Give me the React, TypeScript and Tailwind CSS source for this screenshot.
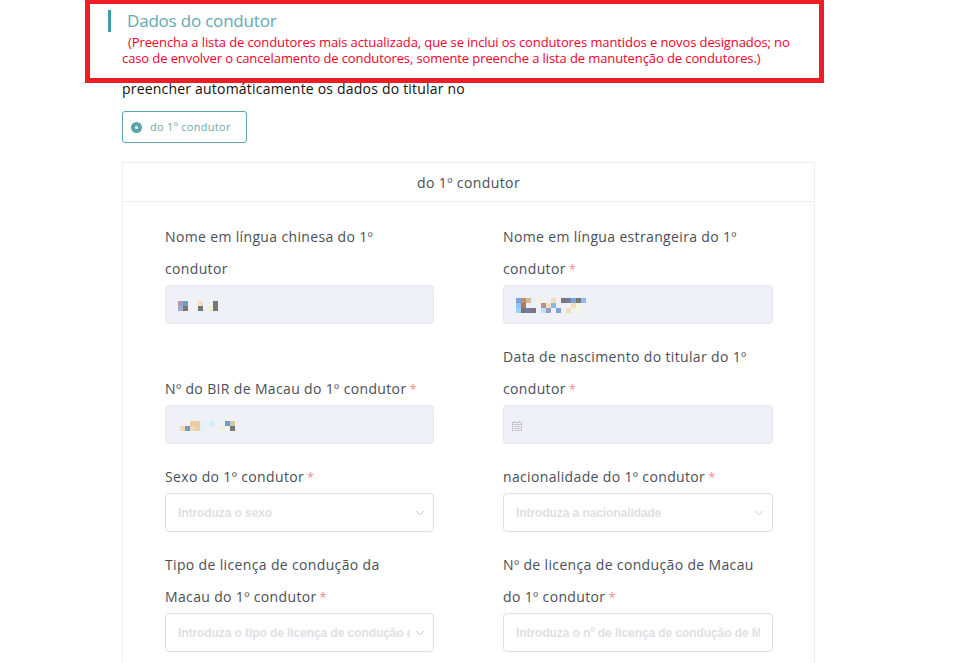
import { ChevronDown } from "lucide-react";
import type { ReactNode } from "react";

const mosaicOne = [
  ["#b09ab8", "#6f9dc8", "", "", "#f0dfb8", "", "", "#777777"],
  ["#a8a8d4", "#777777", "", "", "#777777", "", "#f0f0d0", "#777777"],
];

const mosaicTwo = [
  ["#7aa5d8", "#b89078", "#e0b890", "#e0f0f4", "#f4f4e4", "#f4f4e4", "", "#f0dfb8", "", "#777777", "#7a7a9a", "#7aa5d8", "#777777", "#90b8e8"],
  ["#90c4f0", "#b07860", "", "", "", "#b89090", "#f0dfb8", "#8ab8e8", "", "", "", "#f0dfb8", "#f4f4e0", ""],
  ["#a0d0f8", "#777777", "#7a7aa8", "#777777", "", "#b8e0f8", "#9a98c8", "", "#7aa5d8", "", "#f0dfb8", "", "#f4f4e0", ""],
];

const mosaicThree = [
  ["", "", "#eecba0", "#eecba0", "#dff3f6", "", "#c8f0f8", "", "", "#6f9dc8", "#d8c8a0"],
  ["#f0d9b8", "#6f9dc8", "#f0d9b8", "#f0cfa8", "#dff3f6", "", "", "", "#f0f0d0", "", "#777777"],
];

// the blurred-out values in the screenshot
function Mosaic({ rows }: { rows: string[][] }) {
  return (
    <svg width={rows[0].length * 5} height={rows.length * 5} className="block">
      {rows.map((row, y) =>
        row.map((color, x) =>
          color ? <rect key={`${x}-${y}`} x={x * 5} y={y * 5} width={5} height={5} fill={color} /> : null
        )
      )}
    </svg>
  );
}

function CalendarIcon() {
  return (
    <svg width="10" height="10" viewBox="0 0 10 10" className="ml-[8px] mt-[2px] block" fill="none" stroke="#c4c7cf" strokeWidth="1">
      <rect x="0.5" y="1.5" width="9" height="8" />
      <path d="M0 3.5h10M2 5.5h6M2 7.5h6M2.5 0v1.5M7.5 0v1.5" />
    </svg>
  );
}

function Label({ children, required }: { children: ReactNode; required?: boolean }) {
  return (
    <label className="block text-[14px] leading-[32px] tracking-[0.35px] text-[#4a4f57]">
      {children}
      {required && <span className="ml-[3px] text-[13px] leading-none text-[#f78989]">*</span>}
    </label>
  );
}

function Disabled({ children }: { children?: ReactNode }) {
  return (
    <div className="flex h-[39px] items-center rounded-[4px] border border-[#e4e7ed] bg-[#f0f1f6]">{children}</div>
  );
}

function Select({ placeholder }: { placeholder: string }) {
  return (
    <div className="flex h-[39px] items-center rounded-[4px] border border-[#dcdfe6] bg-white pl-[12px] pr-[6px]">
      <span className="flex-1 overflow-hidden whitespace-nowrap font-['Liberation_Sans',sans-serif] text-[12px] font-bold tracking-[-0.08px] text-[#dfe0e5]">
        {placeholder}
      </span>
      <ChevronDown className="ml-[3px] h-[14px] w-[14px] shrink-0 text-[#c0c4cc]" strokeWidth={1.5} />
    </div>
  );
}

export default function App() {
  return (
    <div className="relative h-[663px] overflow-hidden bg-white font-['Open_Sans',sans-serif]">
      {/* red annotation box drawn over the screenshot */}
      <div className="absolute left-[85px] top-[-1px] h-[84px] w-[739px] border-[5px] border-[#ee1c25]" />

      <div className="ml-[108px] mt-[10px] flex h-[22px] items-center border-l-[3px] border-[#3f9ea6] pl-[16px] text-[17px] tracking-[-0.2px] text-[#63a9b3]">
        Dados do condutor
      </div>

      <div className="ml-[122px] w-[693px]">
        <p className="mt-[2px] h-[33px] text-[13px] leading-[16px] tracking-[-0.1px] text-[#f5002d]">
          <span className="ml-[6px]">(Preencha a lista de condutores mais actualizada, que se inclui os condutores mantidos e novos designados; no</span>
          <br />
          caso de envolver o cancelamento de condutores, somente preenche a lista de manutenção de condutores.)
        </p>

        <p className="mt-[12px] text-[14px] leading-[20px] tracking-[0.2px] text-[#111111]">preencher automáticamente os dados do titular no</p>

        <div className="mt-[12px] flex h-[32px] w-[125px] items-center rounded-[3px] border border-[#5ba4ab] pl-[8px] text-[11px] tracking-[0.3px] text-[#6fa8b0]">
          <span className="mr-[8px] flex h-[11px] w-[11px] items-center justify-center rounded-full bg-[#5ba4ab]">
            <span className="h-[3px] w-[3px] rounded-full bg-white" />
          </span>
          do 1º condutor
        </div>

        <div className="mt-[19px] border border-[#ebeef5]">
          <div className="flex h-[39px] items-center justify-center border-b border-[#ebeef5] text-[14px] tracking-[0.4px] text-[#4a4f57]">
            do 1º condutor
          </div>
          <div className="grid grid-cols-[269px_270px] items-end gap-x-[69px] gap-y-[17px] px-[42px] pt-[19px] pb-[20px]">
            <div>
              <Label>
                Nome em língua chinesa do 1º
                <br />
                condutor
              </Label>
              <Disabled>
                <div className="ml-[12px] mt-[3px]">
                  <Mosaic rows={mosaicOne} />
                </div>
              </Disabled>
            </div>
            <div>
              <Label required>
                Nome em língua estrangeira do 1º
                <br />
                condutor
              </Label>
              <Disabled>
                <div className="ml-[12px] mt-[2px]">
                  <Mosaic rows={mosaicTwo} />
                </div>
              </Disabled>
            </div>
            <div>
              <Label required>Nº do BIR de Macau do 1º condutor</Label>
              <Disabled>
                <div className="ml-[14px] mt-[3px]">
                  <Mosaic rows={mosaicThree} />
                </div>
              </Disabled>
            </div>
            <div>
              <Label required>
                Data de nascimento do titular do 1º
                <br />
                condutor
              </Label>
              <Disabled>
                <CalendarIcon />
              </Disabled>
            </div>
            <div>
              <Label required>Sexo do 1º condutor</Label>
              <Select placeholder="Introduza o sexo" />
            </div>
            <div>
              <Label required>nacionalidade do 1º condutor</Label>
              <Select placeholder="Introduza a nacionalidade" />
            </div>
            <div>
              <Label required>
                Tipo de licença de condução da
                <br />
                Macau do 1º condutor
              </Label>
              <Select placeholder="Introduza o tipo de licença de condução da Macau" />
            </div>
            <div>
              <Label required>
                Nº de licença de condução de Macau
                <br />
                do 1º condutor
              </Label>
              <div className="flex h-[39px] items-center rounded-[4px] border border-[#dcdfe6] bg-white pl-[12px] pr-[12px]">
                <span className="flex-1 overflow-hidden whitespace-nowrap font-['Liberation_Sans',sans-serif] text-[12px] font-bold tracking-[-0.08px] text-[#dfe0e5]">
                  Introduza o nº de licença de condução de Macau
                </span>
              </div>
            </div>
          </div>
        </div>
      </div>
    </div>
  );
}
